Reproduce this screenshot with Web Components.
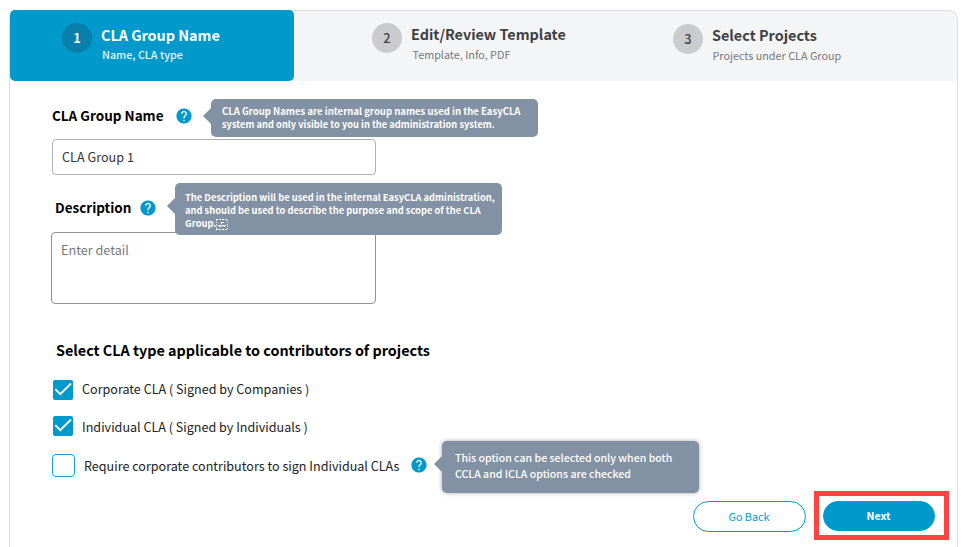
<!DOCTYPE html>
<html lang="en">
<head>
<meta charset="utf-8">
<title>CLA Group</title>
<style>
html,body{margin:0;height:100%;overflow:hidden;background:#fff}
body{font-family:"Noto Sans CJK SC","Source Sans Pro",sans-serif;color:#111}
</style>
</head>
<body>
<cla-wizard></cla-wizard>
<script>
const define = (name, html) => customElements.define(name, class extends HTMLElement {
  connectedCallback() {
    if (this.shadowRoot) return;
    const t = document.createElement('template');
    t.innerHTML = html;
    this.attachShadow({ mode: 'open' }).append(t.content.cloneNode(true));
  }
});

define('wizard-step', `
<style>
:host{display:flex;box-sizing:border-box;height:71px;color:#3f4143}
.num{width:30px;height:30px;border-radius:50%;background:#c9cbcd;margin-top:var(--num-top,13px);font-size:12.8px;line-height:30px;font-weight:500;text-align:center;flex:none}
.text{margin-left:9px;margin-top:var(--text-top,15px)}
.title{font-weight:700;font-size:14.4px;line-height:20px;white-space:nowrap}
.sub{font-size:10.8px;line-height:20px;padding-left:var(--sub-x,1.5px);color:#77797b;white-space:nowrap;margin-top:var(--sub-gap,0)}
:host([active]){background:#09c;border-radius:5px;color:#fff}
:host([active]) .num{background:#0880ab;font-weight:700}
:host([active]) .sub{color:#e9f6fb;font-weight:500;font-size:10.75px}
</style>
<div class="num"><slot name="num"></slot></div>
<div class="text"><div class="title"><slot></slot></div><div class="sub"><slot name="sub"></slot></div></div>`);

define('help-tip', `
<style>
:host{display:block;position:relative;width:18px;height:18px;flex:none}
svg{display:block}
.tip{position:absolute;z-index:2;left:var(--x,36px);top:var(--y,-8px);width:var(--w,327px);height:var(--h,38px);box-sizing:border-box;background:#8391a5;border-radius:5px;padding:var(--pad,6px 0 0 11px);color:#fff;font-weight:var(--weight,600);font-size:var(--fs,9.53px);line-height:var(--lh,13px);white-space:nowrap;box-shadow:var(--shadow,none)}
.tip::before{content:"";position:absolute;right:100%;top:var(--arrow,9px);border:8px solid transparent;border-left:0;border-right-color:#8391a5}
</style>
<svg width="18" height="18" viewBox="0 0 24 24"><path fill="#09c" d="M12 2C6.48 2 2 6.48 2 12s4.480 10 10 10 10-4.480 10-10S17.520 2 12 2zm1 17h-2v-2h2v2zm2.070-7.750l-.9.920C13.450 12.900 13 13.500 13 15h-2v-.5c0-1.100.45-2.100 1.170-2.830l1.240-1.260c.37-.36.59-.86.59-1.410 0-1.100-.9-2-2-2s-2 .9-2 2H8c0-2.210 1.790-4 4-4s4 1.790 4 4c0 .88-.36 1.680-.93 2.250z" stroke="#09c" stroke-width=".2"/></svg>
<div class="tip"><slot></slot></div>`);

define('object-mark', `
<style>:host{display:inline-block;width:12px;height:11px;line-height:0;vertical-align:-3px}svg{display:block}</style>
<svg width="12" height="11" viewBox="0 0 12 11" fill="none" stroke="#fff"><path stroke-dasharray="2 1" d="M0 .5h12M0 10.500h12"/><path stroke-dasharray="1 1" d="M.5 1v9M11.500 1v9"/><path d="M5 3.500h3M5.500 3v2M2 6.500h8M3 7.500h2M6 7.500h1M8 7.500h1" opacity=".85"/></svg>`);

define('field-label', `
<style>:host{display:flex;height:20px;align-items:flex-start}
.t{font-weight:600;font-size:13.5px;line-height:20px;white-space:nowrap;color:#000;width:var(--label-w)}
::slotted(help-tip){margin-top:2px}</style>
<div class="t"><slot></slot></div><slot name="help"></slot>`);

define('text-box', `
<style>:host{display:block;box-sizing:border-box;background:#fff;border:1px solid #b1b1b1;border-radius:4px;font-size:12.65px;line-height:20px;color:#333;white-space:nowrap}
:host([multiline]){border-color:#929292;color:#777}</style><slot></slot>`);

define('check-option', `
<style>
:host{display:flex;height:20px}
.box{box-sizing:border-box;width:20px;height:20px;background:#09c;border-radius:2px;flex:none}
svg{display:block}
:host(:not([checked])){height:23px}
:host(:not([checked])) .box{width:23px;height:23px;background:#fff;border:1px solid #1b9fce;border-radius:4px}
:host(:not([checked])) .box svg{display:none}
.t{margin:var(--shift,0) 0 0 9px;width:var(--label-w,auto);font-size:12.57px;line-height:20px;white-space:nowrap;color:#222}
</style>
<div class="box"><svg width="20" height="20" viewBox="0 0 20 20" fill="none" stroke="#fff" stroke-width="1.900"><path d="M2.300 9.200l5 5L18 3.500"/></svg></div>
<div class="t"><slot></slot></div><slot name="help"></slot>`);

define('pill-button', `
<style>
:host{display:block;box-sizing:border-box;width:113px;height:31px;border:1px solid #09c;border-radius:16px;padding-right:1px;text-align:center;color:#09c;font-size:10.8px;line-height:29px}
:host([primary]){width:112px;height:30px;background:#09c;color:#fff;font-weight:600;font-size:10.62px;line-height:28px}
</style><slot></slot>`);

define('cla-wizard', `
<style>
:host{display:block;padding:10px 8px 0 9px}
.card{box-sizing:border-box;height:560px;border:1px solid #d9dce8;border-radius:9px}
header{display:grid;grid-template-columns:284px 310px 1fr;height:71px;margin-top:-1px;background:linear-gradient(#f4f5f7,#f4f5f7) 20px 1px/100% 70px no-repeat;border-radius:8px 9px 3px 0;position:relative}
header::after{content:"";position:absolute;inset:0 0 auto 284px;height:12px;border-top:1px solid #d9dce8;border-radius:0 9px 0 0}
main{padding:24px 8px 0 42px}
.heading{font-weight:700;font-size:14.36px;line-height:20px;color:#000;margin:36px 0 20px 4px}
footer{display:flex;justify-content:flex-end;margin-top:14px}
.mark{box-sizing:border-box;width:135px;height:49px;border:5px solid #ff4343;padding:5px 0 0 4px;margin-left:8px}
</style>
<div class="card">
<header>
<wizard-step active style="padding-left:52px;--sub-x:1px"><span slot="num">1</span>CLA Group Name<span slot="sub">Name, CLA type</span></wizard-step>
<wizard-step style="padding-left:78px;--text-top:14px"><span slot="num">2</span>Edit/Review Template<span slot="sub">Template, Info, PDF</span></wizard-step>
<wizard-step style="padding-left:69px;--num-top:14px;--sub-x:.5px"><span slot="num">3</span>Select Projects<span slot="sub">Projects under CLA Group</span></wizard-step>
</header>
<main>
<field-label style="--label-w:123px">CLA Group Name<help-tip slot="help">CLA Group Names are internal group names used in the EasyCLA<br><span style="font-size:9.3px">system and only visible to you in the administration system.</span></help-tip></field-label>
<text-box style="width:324px;height:36px;margin:14px 0 0;padding:7px 9px">CLA Group 1</text-box>
<field-label style="margin-top:22px;padding-left:3px;--label-w:84px">Description<help-tip slot="help" style="--y:-16px;--h:52px;--arrow:15px;--fs:9.33px;--pad:8px 0 0 10px">The Description will be used in the internal EasyCLA administration,<br>and should be used to describe the purpose and scope of the CLA<br>Group.<object-mark></object-mark></help-tip></field-label>
<text-box multiline style="width:325px;height:72px;margin:15px 0 0 -1px;padding:7px 9px">Enter detail</text-box>
<div class="heading">Select CLA type applicable to contributors of projects</div>
<check-option checked style="margin-left:1px;--shift:-1px">Corporate CLA ( Signed by Companies )</check-option>
<check-option checked style="margin:16px 0 0 1px;--shift:1px">Individual CLA ( Signed by Individuals )</check-option>
<check-option style="margin-top:18px;--shift:2px;--label-w:326px">Require corporate contributors to sign Individual CLAs<help-tip slot="help" style="margin-top:2px;--x:32px;--y:-15px;--w:257px;--h:52px;--arrow:15px;--fs:10.57px;--weight:500;--lh:16px;--pad:9px 0 0 13px;--shadow:0 0 4px rgba(0,0,0,.35)">This option can be selected only when both<br>CCLA and ICLA options are checked</help-tip></check-option>
<footer><pill-button style="margin-top:10px">Go Back</pill-button><div class="mark"><pill-button primary>Next</pill-button></div></footer>
</main>
</div>`);
</script>
</body>
</html>
